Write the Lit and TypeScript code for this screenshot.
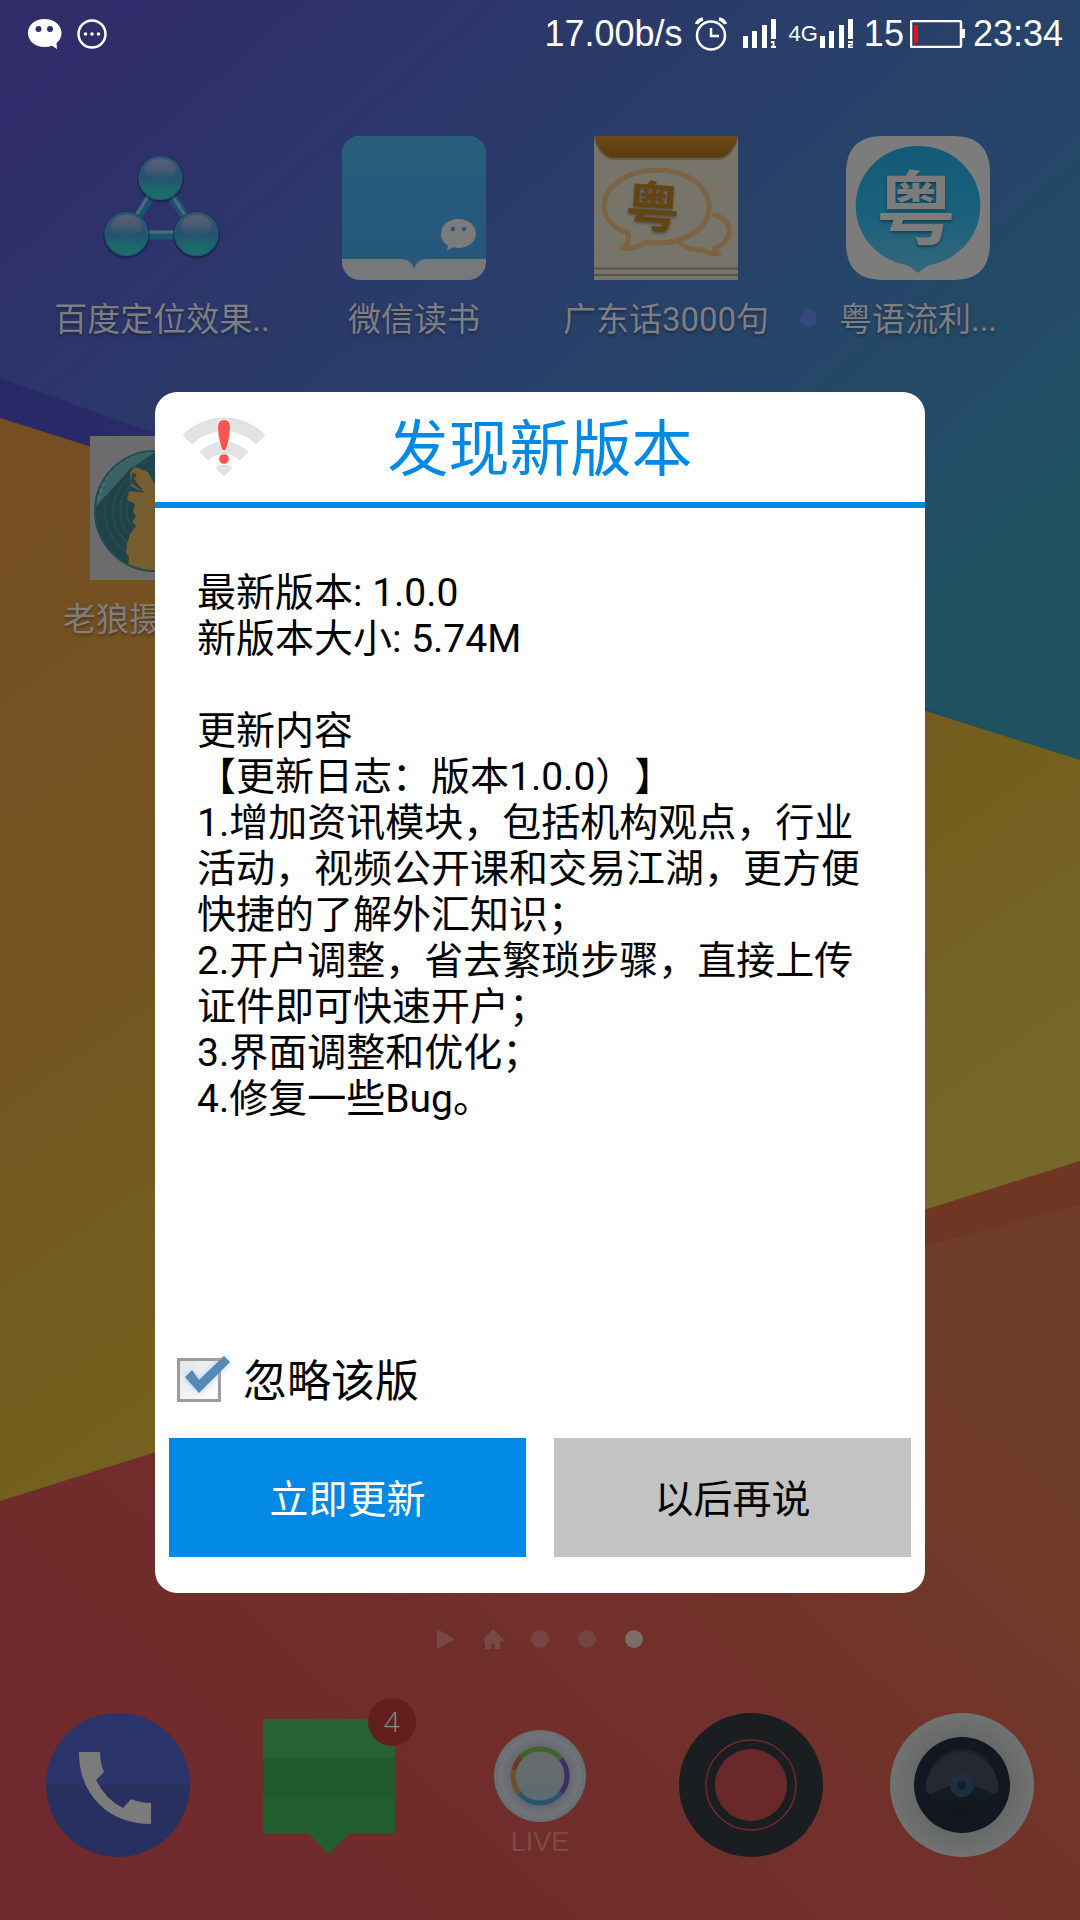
import { LitElement, html, css, svg, TemplateResult } from "lit";
import { customElement, property, state } from "lit/decorators.js";

interface AppItem {
  label: string;
  icon: TemplateResult;
  fresh?: boolean;
  clipped?: boolean;
}

const ball = (x: number, y: number) => svg`
  <circle cx=${x} cy=${y + 1} r="23.500" fill="#101830" opacity="0.5"/>
  <circle cx=${x} cy=${y} r="21.500" fill="url(#orb)" stroke="#205870" stroke-width="1.500"/>
  <ellipse cx=${x} cy=${y - 8} rx="15" ry="11" fill="url(#gloss)"/>`;

const moleculeIcon = html`<svg viewBox="0 0 144 144" aria-hidden="true">
  <defs>
    <linearGradient id="orb" x1="0" y1="0" x2="0" y2="1">
      <stop offset="0" stop-color="#445470"/><stop offset="0.5" stop-color="#245270"/>
      <stop offset="0.8" stop-color="#1b696c"/><stop offset="1" stop-color="#1d7069"/>
    </linearGradient>
    <linearGradient id="gloss" x1="0" y1="0" x2="0" y2="1">
      <stop offset="0" stop-color="#586074"/><stop offset="1" stop-color="#586074" stop-opacity="0"/>
    </linearGradient>
  </defs>
  <path d="M71 43L37 99H107Z" fill="none" stroke="#1b5470" stroke-width="9"/>
  <path d="M70 41L36 96H106Z" fill="none" stroke="#4b6a7c" stroke-width="3"/>
  ${ball(70.5, 42)}${ball(36.5, 98)}${ball(106.5, 98)}
</svg>`;

const readerIcon = html`<svg viewBox="0 0 144 144" aria-hidden="true">
  <defs>
    <linearGradient id="cover" x1="0" y1="0" x2="0" y2="1">
      <stop offset="0" stop-color="#285e7b"/><stop offset="1" stop-color="#25567c"/>
    </linearGradient>
  </defs>
  <rect width="144" height="144" rx="18" fill="#757979"/>
  <path d="M0 123V18A18 18 0 0 1 18 0H126A18 18 0 0 1 144 18V123H84Q74 124 72 133Q70 124 60 123Z" fill="url(#cover)"/>
  <path d="M116.500 83C126.500 83 134 89.500 134 97.500S126.500 112 116.500 112Q113.500 112 111 111.300L105 114.500L106 109.500C101.500 107 99 102.500 99 97.500C99 89.500 106.500 83 116.500 83Z" fill="#7b7b7b"/>
  <circle cx="111" cy="93" r="2.200" fill="#25567c"/><circle cx="122" cy="93" r="2.200" fill="#25567c"/>
</svg>`;

const phrasebookIcon = html`<svg viewBox="0 0 144 144" aria-hidden="true">
  <defs>
    <linearGradient id="flap" x1="0" y1="0" x2="0" y2="1">
      <stop offset="0" stop-color="#6b4817"/><stop offset="1" stop-color="#5b3c10"/>
    </linearGradient>
  </defs>
  <rect width="144" height="144" fill="#77756a"/>
  <path d="M0 3Q6 24 21 24H123Q138 24 144 3V0H0Z" fill="#4e4935" opacity="0.5"/>
  <path d="M0 0H144Q138 22 122 22H22Q6 22 0 0Z" fill="url(#flap)"/>
  <g fill="none" stroke="#7b6344" stroke-width="5" stroke-linejoin="round" stroke-linecap="round">
    <path d="M34 97C20 92 10 83 10 71C10 50 34 34 63 34S115 50 115 71S92 107 63 107Q57 107 52 106Q42 114 28 112Q36 108 34 97Z"/>
    <path d="M120 79C130 81 136 88 135 97C134 105 128 110 121 112Q120 117 125 118Q114 118 109 114C99 114 91 112 87 108"/>
  </g>
  <text x="59" y="91" text-anchor="middle" font-size="54" font-weight="700" fill="#65450f" transform="rotate(4 59 70)">粤</text>
  <path d="M0 132.500H144M0 139H144" stroke="#56544c" stroke-width="2"/>
</svg>`;

const fluentIcon = html`<svg viewBox="0 0 144 144" aria-hidden="true">
  <defs>
    <linearGradient id="pin" x1="0" y1="0" x2="0" y2="1">
      <stop offset="0" stop-color="#135a78"/><stop offset="0.5" stop-color="#18607b"/><stop offset="1" stop-color="#35687b"/>
    </linearGradient>
  </defs>
  <path d="M38 0H106C132 0 144 12 144 38V106C144 132 132 144 106 144H38C12 144 0 132 0 106V38C0 12 12 0 38 0Z" fill="#7c7c7c"/>
  <path d="M72 10A61.500 60 0 0 1 84 129Q79 131 72 137Q65 131 60 129A61.500 60 0 0 1 72 10Z" fill="url(#pin)"/>
  <text x="70" y="102" text-anchor="middle" font-size="80" font-weight="700" fill="#7c7c7c">粤</text>
</svg>`;

const wolfIcon = html`<svg viewBox="0 0 144 144" aria-hidden="true">
  <defs><clipPath id="disc"><circle cx="65" cy="75" r="60"/></clipPath></defs>
  <rect width="144" height="144" fill="#6c6c6c"/>
  <g clip-path="url(#disc)">
    <rect width="144" height="144" fill="#1f4348"/>
    <g fill="none" stroke="#244c53" stroke-width="2">
      <circle cx="65" cy="75" r="20"/><circle cx="65" cy="75" r="28"/><circle cx="65" cy="75" r="35"/>
      <circle cx="65" cy="75" r="42"/><circle cx="65" cy="75" r="50"/>
    </g>
    <path d="M0 77L40 33L90 0H0Z" fill="#3a6163"/>
    <path d="M9 62Q16 30 42 20T80 18" fill="none" stroke="#4d7272" stroke-width="3" stroke-dasharray="1 6" stroke-linecap="round"/>
    <path d="M45 31L40 36L41 50L55 57L39 55L37 64L45 68L43 76L46 80L42 86L46 90L40 98L37 108L36 116L39 122L37 140H92V60L65 49L58 36Z" fill="#775e31"/>
    <path d="M42 37L47 38L44 43L55 57L41 47Z" fill="#2b4340"/>
  </g>
  <circle cx="65" cy="75" r="60" fill="none" stroke="#234c50" stroke-width="2"/>
</svg>`;

const phoneIcon = html`<svg viewBox="0 0 144 144" aria-hidden="true">
  <circle cx="72" cy="72" r="72" fill="#28305f"/>
  <path d="M0 72A72 72 0 0 1 144 72Z" fill="#2b356b"/>
  <path d="M33 39H54Q54 50 58 59L50 67Q60 87 77 95L85 86Q94 90 105 90V111Q73 111 53 91T33 39Z" fill="#7b7b7b"/>
</svg>`;

const messageIcon = html`<svg viewBox="0 0 144 144" aria-hidden="true">
  <path d="M6 6H138V120H93L72 141L51 120H6Z" fill="#215f2e"/>
  <path d="M6 6H138V45H6Z" fill="#286133"/>
  <path d="M6 45H138V84H6Z" fill="#20592b"/>
</svg>`;

const liveIcon = html`<svg viewBox="0 0 144 144" aria-hidden="true">
  <defs>
    <radialGradient id="pearl"><stop offset="0.6" stop-color="#666470"/><stop offset="0.85" stop-color="#707478"/><stop offset="1" stop-color="#666f72"/></radialGradient>
    <linearGradient id="core" x1="0" y1="0" x2="0" y2="1"><stop offset="0" stop-color="#6b6b69"/><stop offset="1" stop-color="#5a6c71"/></linearGradient>
  </defs>
  <circle cx="72" cy="63" r="46" fill="url(#pearl)"/>
  <circle cx="72" cy="63" r="28" fill="url(#core)"/>
  <g fill="none" stroke-width="5">
    <path d="M51 46A27 27 0 0 1 93 46" stroke="#40642c"/>
    <path d="M93 46A27 27 0 0 1 93 80" stroke="#3a3062"/>
    <path d="M93 80A27 27 0 0 1 51 80" stroke="#285568"/>
    <path d="M51 80A27 27 0 0 1 46 57" stroke="#6c5029"/>
    <path d="M46 57A27 27 0 0 1 53 44" stroke="#6a3728"/>
  </g>
  <text class="live" x="72" y="138" text-anchor="middle" font-size="27" fill="#7c4c47">LIVE</text>
</svg>`;

const recordIcon = html`<svg viewBox="0 0 144 144" aria-hidden="true">
  <circle cx="72" cy="72" r="72" fill="#1a1e20"/>
  <circle cx="72" cy="72" r="45" fill="none" stroke="#6c2b2d" stroke-width="1.500"/>
  <circle cx="72" cy="72" r="36" fill="#692829"/>
</svg>`;

const cameraIcon = html`<svg viewBox="0 0 144 144" aria-hidden="true">
  <defs>
    <radialGradient id="rim"><stop offset="0.66" stop-color="#676968"/><stop offset="1" stop-color="#717372"/></radialGradient>
    <linearGradient id="lens" x1="0" y1="0" x2="0" y2="1"><stop offset="0" stop-color="#1a252d"/><stop offset="1" stop-color="#10161a"/></linearGradient>
  </defs>
  <circle cx="72" cy="72" r="72" fill="url(#rim)"/>
  <circle cx="72" cy="72" r="48" fill="#121721"/>
  <circle cx="72" cy="70" r="34" fill="url(#lens)"/>
  <circle cx="72" cy="72" r="12" fill="#142a38"/>
  <path d="M36 76A36 36 0 0 1 108 76Q107 81 102 80Q84 70 72 70T42 80Q37 81 36 76Z" fill="#23292e" stroke="#262b34"/>
  <circle cx="72" cy="72" r="12" fill="#1f3347" fill-opacity="0.5"/>
  <circle cx="72" cy="72" r="4.500" fill="#11202a"/>
</svg>`;

@customElement("status-bar")
class StatusBar extends LitElement {
  static styles = css`
    :host { display: block; color: #fff; font: 36px/40px "Liberation Sans", Arial, sans-serif; }
    .bar { display: flex; align-items: center; justify-content: space-between; padding: 14px 17px 0 27px; height: 40px; }
    .group { display: flex; align-items: center; }
    .notices { gap: 14px; }
    svg { display: block; flex: none; }
    .alarm { margin: 0 16px 0 12px; }
    .net { font-size: 22px; margin: 0 2px 0 12px; }
    .level { margin: 0 6px 0 10px; }
    .clock { margin-left: 8px; }
  `;

  private signal(slot: number) {
    return html`<svg width="34" height="30" viewBox="0 0 34 30" fill="#fff" aria-label="信号">
      <path d="M0 17H5V29H0ZM9 12H14V29H9ZM19 6H24V29H19ZM28 0H33V20H28Z"/>
      ${slot === 1
        ? svg`<path d="M28 22H31.500V27H33V29H28V27H29.500V24H28Z"/>`
        : svg`<path d="M28 22H33V26.500H30V27.500H33V29H28V25H31.500V24H28Z"/>`}
    </svg>`;
  }

  render() {
    return html`<header class="bar">
      <div class="group notices">
        <svg width="36" height="32" viewBox="0 0 36 32" aria-label="微信">
          <path d="M17.500 1C27 1 34.500 7 34.500 15Q34.500 21 29.500 25L30 31L25 27.800Q21.500 29 17.500 29C8 29 1 23 1 15S8 1 17.500 1Z" fill="#fff"/>
          <circle cx="11.500" cy="11" r="3" fill="#2f2c69"/><circle cx="23" cy="11" r="3" fill="#2f2c69"/>
        </svg>
        <svg width="30" height="32" viewBox="0 0 30 32" aria-label="更多通知">
          <circle cx="15" cy="16" r="13.500" fill="none" stroke="#fff" stroke-width="2.500"/>
          <g fill="#fff"><circle cx="8.500" cy="16" r="1.800"/><circle cx="15" cy="16" r="1.800"/><circle cx="21.500" cy="16" r="1.800"/></g>
        </svg>
      </div>
      <div class="group">
        <span>17.00b/s</span>
        <svg class="alarm" width="32" height="34" viewBox="0 0 32 34" fill="none" stroke="#fff" aria-label="闹钟">
          <circle cx="16" cy="18.500" r="14" stroke-width="2.500"/>
          <path d="M16 11V19H24" stroke-width="2.500"/>
          <path d="M1.500 7Q3 3 8 2M30.500 7Q29 3 24 2" stroke-width="3.500"/>
        </svg>
        ${this.signal(1)}
        <span class="net">4G</span>
        ${this.signal(2)}
        <span class="level">15</span>
        <svg width="55" height="28" viewBox="0 0 55 28" aria-label="电量">
          <rect x="1" y="1" width="50" height="26" rx="1.500" fill="none" stroke="#fff" stroke-width="2.500"/>
          <path d="M52 9H55V18H52Z" fill="#fff"/><path d="M4 5H8V23H4Z" fill="#e01414"/>
        </svg>
        <time class="clock">23:34</time>
      </div>
    </header>`;
  }
}

@customElement("update-dialog")
class UpdateDialog extends LitElement {
  @property() version = "1.0.0";
  @property() size = "5.74M";
  @state() private ignored = true;

  static styles = css`
    :host { display: block; font-family: Roboto, "Noto Sans CJK SC", sans-serif; color: #000; }
    .card { background: #fff; border-radius: 22px; overflow: hidden; display: flex; flex-direction: column; }
    .head { display: grid; grid-template-columns: 1fr auto 1fr; align-items: center; height: 110px; padding: 0 28px; border-bottom: 6px solid #0289e6; }
    .wifi { width: 82px; height: 60px; display: block; }
    .title { margin: 0; padding-top: 6px; color: #0289e6; font-size: 61px; line-height: 80px; font-weight: 400; }
    .body { padding: 62px 42px 0; min-height: 780px; font-size: 39px; line-height: 46px; text-spacing-trim: space-all; }
    .body p { margin: 0; }
    .log { margin-top: 46px; }
    .ignore { display: flex; align-items: center; gap: 22px; padding: 0 22px; height: 60px; font-size: 44px; line-height: 60px; align-self: flex-start; }
    .caption { padding-top: 4px; }
    .tick { position: relative; width: 44px; height: 44px; }
    .tick input { appearance: none; margin: 0; width: 44px; height: 44px; border: 3px solid #9c9c9c; background: linear-gradient(135deg, #e3e5e8, #fff); display: block; }
    .tick svg { position: absolute; left: 0; top: -6px; width: 60px; height: 52px; pointer-events: none; visibility: hidden; }
    .tick input:checked + svg { visibility: visible; }
    .actions { display: grid; grid-template-columns: 1fr 1fr; gap: 28px; padding: 28px 14px 36px; }
    .btn { border: 0; border-radius: 0; height: 119px; padding: 4px 0 0; font: inherit; font-size: 39px; line-height: 46px; background: #c3c3c3; color: #000; }
    .primary { background: #0289e6; color: #fff; }
  `;

  render() {
    return html`<section class="card" role="dialog" aria-labelledby="title">
      <header class="head">
        <svg class="wifi" viewBox="0 0 82 60" aria-hidden="true">
          <g fill="#e3e3e3" stroke="#d6d6d6" stroke-width="0.600">
            <path d="M0 18A58 58 0 0 1 82 18L73 27A45.500 45.500 0 0 0 9 27Z"/>
            <path d="M17 35A34 34 0 0 1 65 35L57 43A23 23 0 0 0 25 43Z"/>
            <path d="M33 51A11.500 11.500 0 0 1 49 51L41 59Z"/>
          </g>
          <g fill="#fb5252" stroke="#f4eeee" stroke-width="2" paint-order="stroke">
            <path d="M41 3C45 3 47 6 47 10Q46 25 42.500 33H39.500Q36 25 35 10C35 6 37 3 41 3Z"/>
            <circle cx="41" cy="42" r="4.800"/>
          </g>
        </svg>
        <h1 class="title" id="title">发现新版本</h1>
      </header>
      <div class="body">
        <p>最新版本: ${this.version}</p>
        <p>新版本大小: ${this.size}</p>
        <div class="log">
          <p>更新内容</p>
          <p>【更新日志：版本1.0.0）】</p>
          <p>1.增加资讯模块，包括机构观点，行业活动，视频公开课和交易江湖，更方便快捷的了解外汇知识；</p>
          <p>2.开户调整，省去繁琐步骤，直接上传证件即可快速开户；</p>
          <p>3.界面调整和优化；</p>
          <p>4.修复一些Bug。</p>
        </div>
      </div>
      <label class="ignore">
        <span class="tick">
          <input type="checkbox" .checked=${this.ignored}
            @change=${(e: Event) => (this.ignored = (e.target as HTMLInputElement).checked)}>
          <svg viewBox="0 0 60 52" aria-hidden="true">
            <defs><filter id="glow" x="-30%" y="-30%" width="160%" height="160%"><feGaussianBlur stdDeviation="3"/></filter></defs>
            <path d="M8 25L15 19L22 28L47 4L53 10L22 41Z" fill="#9cc3e4" opacity="0.8" filter="url(#glow)"/>
            <path d="M8 25L15 18L22 28L47 4L53 10L22 41Z" fill="#5489b8"/>
          </svg>
        </span>
        <span class="caption">忽略该版</span>
      </label>
      <div class="actions">
        <button class="btn primary" type="button">立即更新</button>
        <button class="btn" type="button">以后再说</button>
      </div>
    </section>`;
  }
}

@customElement("app-root")
class AppRoot extends LitElement {
  private apps: AppItem[] = [
    { label: "百度定位效果..", icon: moleculeIcon },
    { label: "微信读书", icon: readerIcon },
    { label: "广东话3000句", icon: phrasebookIcon },
    { label: "粤语流利...", icon: fluentIcon, fresh: true },
    { label: "老狼摄", icon: wolfIcon, clipped: true },
  ];

  private dock = [
    { name: "电话", icon: phoneIcon, badge: 0 },
    { name: "信息", icon: messageIcon, badge: 4 },
    { name: "LIVE", icon: liveIcon, badge: 0 },
    { name: "录屏", icon: recordIcon, badge: 0 },
    { name: "相机", icon: cameraIcon, badge: 0 },
  ];

  static styles = css`
    :host { display: block; font-family: "Liberation Sans Narrow", Roboto, "Noto Sans CJK SC", sans-serif; }
    .screen { position: relative; isolation: isolate; min-height: 100vh; display: flex; flex-direction: column; overflow: hidden; }
    .wallpaper { position: absolute; inset: 0; width: 100%; height: 100%; z-index: -1; }
    .apps { display: grid; grid-template-columns: repeat(4, 1fr); row-gap: 72px; padding: 82px 36px 0; }
    .app { position: relative; display: flex; flex-direction: column; align-items: center; gap: 18px; border: 0; padding: 0; background: none; font: inherit; font-size: 33px; line-height: 44px; height: 228px; color: #7e7e82; text-shadow: 0 2px 3px rgba(0, 0, 0, 0.35); white-space: nowrap; }
    .app svg, .slot svg { width: 144px; height: 144px; display: block; flex: none; font-family: "Noto Sans CJK SC", sans-serif; }
    .clipped .name { align-self: flex-start; padding-left: 27px; }
    .fresh { position: absolute; left: 8px; top: 174px; width: 17px; height: 17px; border-radius: 50%; background: #344a7c; }
    .pager { display: flex; justify-content: center; gap: 23px; margin-top: auto; padding-bottom: 62px; }
    .pager svg { width: 24px; height: 24px; display: block; }
    .dock { display: grid; grid-template-columns: repeat(5, 1fr); justify-items: center; padding: 0 12px 63px; }
    .slot { position: relative; border: 0; padding: 0; background: none; }
    .slot .live { font-family: "Liberation Sans", Arial, sans-serif; }
    .badge { position: absolute; left: 111px; top: -15px; width: 48px; height: 48px; border-radius: 50%; background: #631f1b; color: #8d8d8d; font: 300 28px/46px "Open Sans", sans-serif; text-align: center; }
    .overlay { position: absolute; inset: 0; display: flex; align-items: center; justify-content: center; padding: 65px 155px 0; }
    .overlay update-dialog { flex: 1; }
  `;

  private wallpaper() {
    return html`<svg class="wallpaper" viewBox="0 0 1080 1920" preserveAspectRatio="none" aria-hidden="true">
      <defs>
        <linearGradient id="sky" gradientUnits="userSpaceOnUse" x1="0" y1="100" x2="700" y2="900">
          <stop offset="0" stop-color="#312b6a"/><stop offset="0.3" stop-color="#2b386a"/>
          <stop offset="0.65" stop-color="#264569"/><stop offset="1" stop-color="#1f5261"/>
        </linearGradient>
        <linearGradient id="fold" gradientUnits="userSpaceOnUse" x1="0" y1="400" x2="1080" y2="700">
          <stop offset="0" stop-color="#2a2868"/><stop offset="0.3" stop-color="#2a3069"/><stop offset="1" stop-color="#1d545e"/>
        </linearGradient>
        <linearGradient id="sand" gradientUnits="userSpaceOnUse" x1="0" y1="500" x2="700" y2="1500">
          <stop offset="0" stop-color="#754f22"/><stop offset="0.4" stop-color="#745621"/>
          <stop offset="0.65" stop-color="#745f1e"/><stop offset="0.93" stop-color="#76682a"/>
        </linearGradient>
        <linearGradient id="clay" gradientUnits="userSpaceOnUse" x1="200" y1="1900" x2="800" y2="1250">
          <stop offset="0" stop-color="#70292c"/><stop offset="0.6" stop-color="#71312a"/><stop offset="1" stop-color="#703d28"/>
        </linearGradient>
      </defs>
      <path d="M0 0H1080V1920H0Z" fill="url(#sky)"/>
      <path d="M0 378L1080 762L0 422Z" fill="url(#fold)"/>
      <path d="M0 418L1080 760V1170L0 1510Z" fill="url(#sand)"/>
      <path d="M0 1501L1080 1161V1920H0Z" fill="url(#clay)"/>
      <path d="M500 1344L1080 1161V1205L500 1358Z" fill="#6e3622" opacity="0.85"/>
    </svg>`;
  }

  render() {
    return html`<div class="screen">
      ${this.wallpaper()}
      <status-bar></status-bar>
      <main class="apps">
        ${this.apps.map((a) => html`<button type="button" class="app ${a.clipped ? "clipped" : ""}">
          ${a.icon}
          ${a.fresh ? html`<i class="fresh"></i>` : ""}
          <span class="name">${a.label}</span>
        </button>`)}
      </main>
      <nav class="pager">
        <svg viewBox="0 0 24 24" fill="#754944" aria-hidden="true"><path d="M3 2L21 12L3 22Z"/></svg>
        <svg viewBox="0 0 24 24" fill="#754944" aria-hidden="true"><path d="M12 2L22 12V14H19V22H14V17H10V22H4V14H2V12Z"/></svg>
        <svg viewBox="0 0 24 24" fill="#754541" aria-hidden="true"><circle cx="12" cy="12" r="9"/></svg>
        <svg viewBox="0 0 24 24" fill="#754541" aria-hidden="true"><circle cx="12" cy="12" r="9"/></svg>
        <svg viewBox="0 0 24 24" fill="#7c6d69" aria-hidden="true"><circle cx="12" cy="12" r="9"/></svg>
      </nav>
      <footer class="dock">
        ${this.dock.map((d) => html`<button type="button" class="slot" aria-label=${d.name}>
          ${d.icon}${d.badge ? html`<span class="badge">${d.badge}</span>` : ""}
        </button>`)}
      </footer>
      <div class="overlay"><update-dialog></update-dialog></div>
    </div>`;
  }
}
